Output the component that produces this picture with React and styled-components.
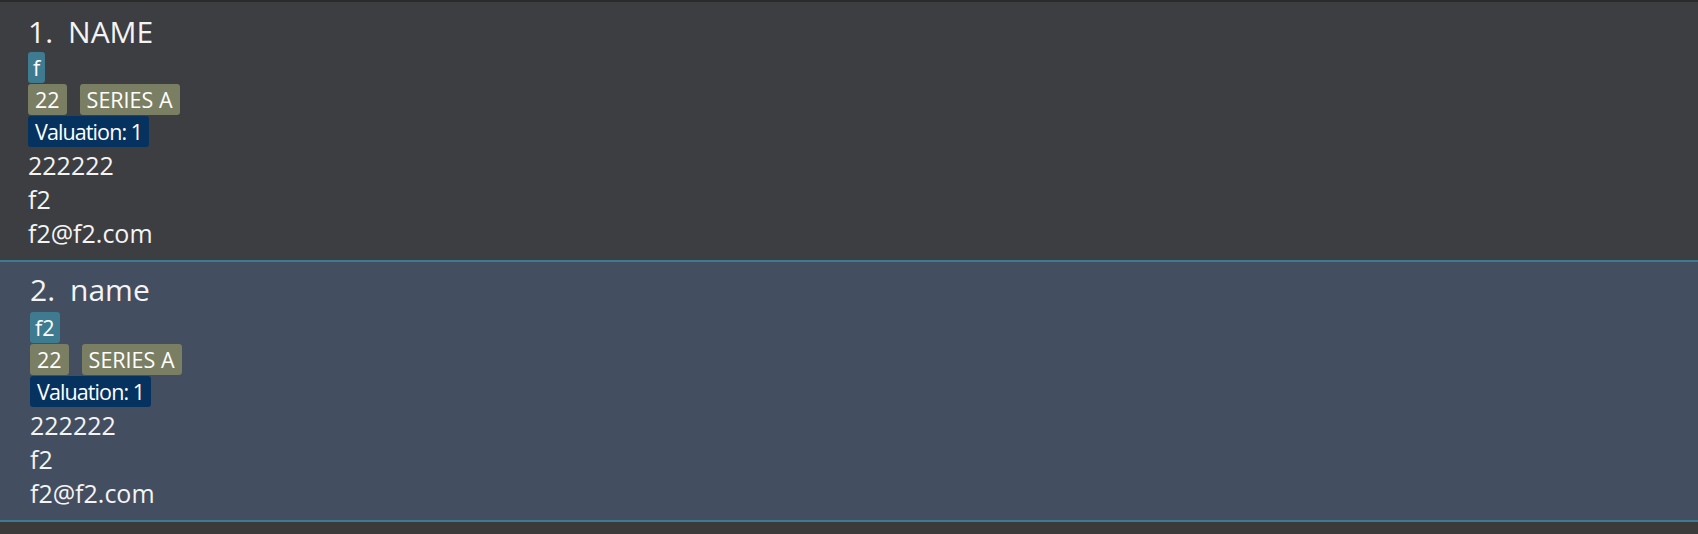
import React from 'react';
import styled, { createGlobalStyle } from 'styled-components';

const GlobalStyle = createGlobalStyle`
  html, body {
    margin: 0;
    padding: 0;
    background: #3b3b3b;
  }
  body {
    font-family: "Open Sans", "Noto Sans", sans-serif;
    color: #f4f4f4;
    width: 1698px;
    height: 534px;
    overflow: hidden;
  }
`;

const List = styled.div`
  display: flex;
  flex-direction: column;
  border-top: 2px solid #2b2b2b;
`;

const Card = styled.div`
  height: 258px;
  box-sizing: content-box;
  display: flex;
  flex-direction: column;
  align-items: flex-start;
  padding-left: ${(p) => (p.selected ? '30px' : '28px')};
  background: ${(p) => (p.selected ? '#434e60' : '#3d3e41')};
  border-top: ${(p) => (p.selected ? '2px solid #3e7b91' : 'none')};
  border-bottom: ${(p) => (p.selected ? '2px solid #3e7b91' : 'none')};
`;

const Title = styled.div`
  display: flex;
  gap: 15px;
  font-size: 30px;
  line-height: 36px;
  margin-top: ${(p) => (p.selected ? '10px' : '12px')};
  margin-bottom: ${(p) => (p.selected ? '4px' : '2px')};
`;

const TagRow = styled.div`
  display: flex;
  gap: 13px;
  margin-bottom: 1px;
`;

const Tag = styled.span`
  display: inline-block;
  height: 31px;
  line-height: 31px;
  padding: 0 ${(p) => (p.narrow ? '5px' : '7px')};
  font-size: 21.5px;
  letter-spacing: ${(p) => (p.tight ? '-0.9px' : '0')};
  border-radius: 3px;
  color: #ffffff;
  background: ${(p) => p.bg};
`;

const Line = styled.div`
  font-size: 25px;
  line-height: 34px;
`;

const people = [
  { id: 1, name: 'NAME', tag: 'f' },
  { id: 2, name: 'name', tag: 'f2', selected: true },
];

export default function App() {
  return (
    <>
      <GlobalStyle />
      <List>
        {people.map((p) => (
          <Card key={p.id} selected={p.selected}>
            <Title selected={p.selected}>
              <span>{p.id}.</span>
              <span>{p.name}</span>
            </Title>
            <TagRow>
              <Tag bg="#3e7b91" narrow>{p.tag}</Tag>
            </TagRow>
            <TagRow>
              <Tag bg="#7a7e62">22</Tag>
              <Tag bg="#7a7e62">SERIES A</Tag>
            </TagRow>
            <TagRow>
              <Tag bg="#063260" tight>Valuation: 1</Tag>
            </TagRow>
            <Line>222222</Line>
            <Line>f2</Line>
            <Line>f2@f2.com</Line>
          </Card>
        ))}
      </List>
    </>
  );
}
